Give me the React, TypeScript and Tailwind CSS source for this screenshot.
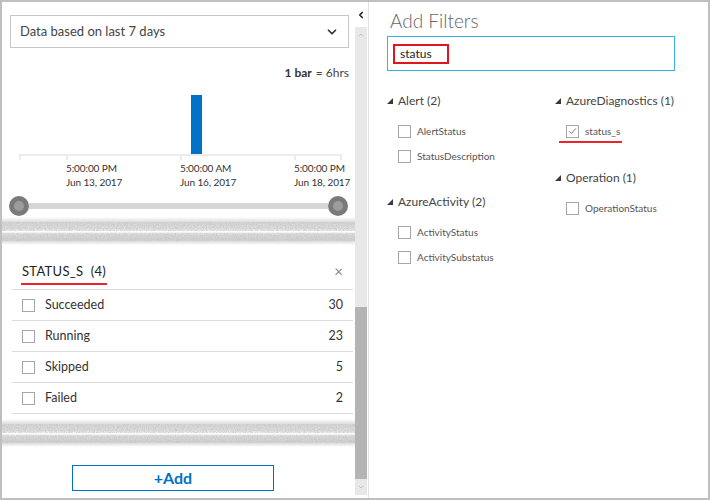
import { ChevronDown, ChevronLeft, ChevronUp } from "lucide-react";

const font = { fontFamily: "Lato, 'Open Sans', sans-serif" };

const Torn = ({ id }: { id: string }) => (
  <svg width="100%" height="28" className="block">
    <defs>
      <filter id={`${id}-f`} x="0" y="0" width="100%" height="100%">
        <feTurbulence type="fractalNoise" baseFrequency="0.9 0.7" numOctaves="2" seed="4" />
        <feColorMatrix
          type="matrix"
          values="0 0 0 0 0.55  0 0 0 0 0.55  0 0 0 0 0.55  1.8 0 0 0 -0.45"
        />
      </filter>
      <linearGradient id={`${id}-g`} x1="0" y1="0" x2="0" y2="1">
        <stop offset="0" stopColor="#ffffff" />
        <stop offset="0.2" stopColor="#d8d8d8" />
        <stop offset="0.42" stopColor="#e2e2e2" />
        <stop offset="0.52" stopColor="#fbfbfb" />
        <stop offset="0.62" stopColor="#dedede" />
        <stop offset="0.82" stopColor="#d2d2d2" />
        <stop offset="1" stopColor="#ffffff" />
      </linearGradient>
    </defs>
    <rect x="0" y="0" width="100%" height="28" fill={`url(#${id}-g)`} />
    <rect x="0" y="5" width="100%" height="9" filter={`url(#${id}-f)`} opacity="0.8" />
    <rect x="0" y="16" width="100%" height="8" filter={`url(#${id}-f)`} opacity="0.8" />
  </svg>
);

const Box = ({ checked }: { checked?: boolean }) => (
  <span className="w-[13px] h-[13px] border border-[#a6a6a6] bg-white flex items-center justify-center shrink-0">
    {checked && (
      <svg width="9" height="8" viewBox="0 0 9 8">
        <path d="M1 4.2 L3.3 6.5 L8 1.3" fill="none" stroke="#777" strokeWidth="1" />
      </svg>
    )}
  </span>
);

const Tri = () => (
  <svg width="6" height="6" viewBox="0 0 6 6" className="shrink-0">
    <path d="M6 0 L6 6 L0 6 Z" fill="#3a3a3a" />
  </svg>
);

const Group = ({ title, items, checked }: { title: string; items: string[]; checked?: string }) => (
  <div className="flex flex-col">
    <div className="flex items-center gap-[5px] h-[18px] text-[12px] text-[#444]">
      <Tri />
      <span>{title}</span>
    </div>
    <div className="flex flex-col gap-[11px] pl-[11px] mt-[14px]">
      {items.map((it) => (
        <div key={it} className="flex items-center gap-[6px] h-[14px] text-[10px] text-[#555]">
          <Box checked={it === checked} />
          <span className="relative">
            {it}
            {it === checked && (
              <span className="absolute left-[-26px] right-[-2px] top-[17px] h-[2px] bg-[#e8252b]" />
            )}
          </span>
        </div>
      ))}
    </div>
  </div>
);

const rows = [
  ["Succeeded", 30],
  ["Running", 23],
  ["Skipped", 5],
  ["Failed", 2],
];

const ticks = [
  { x: 17, t: "", d: "" },
  { x: 64, t: "5:00:00 PM", d: "Jun 13, 2017" },
  { x: 178, t: "5:00:00 AM", d: "Jun 16, 2017" },
  { x: 292, t: "5:00:00 PM", d: "Jun 18, 2017" },
  { x: 338, t: "", d: "" },
];

export default function App() {
  return (
    <div
      className="w-[710px] h-[500px] border-2 border-[#bfbfbf] bg-white flex overflow-hidden text-[#333]"
      style={font}
    >
      {/* left pane */}
      <div className="w-[353px] flex flex-col shrink-0">
        <div className="pt-[13px] pl-2 pr-[6px]">
          <div className="h-[33px] border border-[#c6c6c6] flex items-center justify-between pl-[9px] pr-[9px] text-[13px] text-[#444]">
            <span>Data based on last 7 days</span>
            <ChevronDown size={14} strokeWidth={3} className="text-[#333]" />
          </div>
        </div>
        <div className="mt-[17px] h-4 pr-[6px] flex items-center justify-end text-[12px] text-[#444]">
          <span className="font-bold text-[#333]">1 bar</span>
          <span className="ml-1">= 6hrs</span>
        </div>
        <div className="relative h-[115px]">
          <div className="absolute left-[189px] top-[14px] w-[11px] h-[60px] bg-[#0072c6]" />
          <div className="absolute left-[17px] top-[73px] w-[322px] h-[2px] bg-[#ececec]" />
          {ticks.map((k, i) => (
            <div key={i} className="absolute top-[73px]" style={{ left: k.x }}>
              <div className="w-[2px] h-[6px] bg-[#ececec]" />
              {k.t && (
                <div className="mt-[1px] text-[10px] tracking-[-0.1px] leading-[14px] text-[#333] whitespace-nowrap">
                  <div>{k.t}</div>
                  <div>{k.d}</div>
                </div>
              )}
            </div>
          ))}
        </div>
        <div className="h-5 px-[7px] flex items-center">
          <div className="w-[20px] h-[20px] rounded-full bg-[#7a7a7a] flex items-center justify-center shrink-0">
            <div className="w-[10px] h-[10px] rounded-full bg-[#9c9c9c]" />
          </div>
          <div className="flex-1 h-[6px] bg-[#d6d6d6]" />
          <div className="w-[20px] h-[20px] rounded-full bg-[#7a7a7a] flex items-center justify-center shrink-0">
            <div className="w-[10px] h-[10px] rounded-full bg-[#9c9c9c]" />
          </div>
        </div>
        <div className="mt-[1px]">
          <Torn id="t1" />
        </div>
        <div className="pl-[10px] pr-[2px]">
          <div className="h-[45px] flex items-end justify-between border-b border-[#dcdcdc] pb-[4px]">
            <div className="relative pl-[10px] text-[13px] text-[#222] tracking-[0.3px] pb-[4px]">
              STATUS_S&nbsp; (4)
              <span className="absolute left-[9px] right-[-1px] bottom-0 h-[2px] bg-[#e8252b]" />
            </div>
            <span className="text-[#888] text-[15px] leading-none pr-[10px] self-start mt-[19px]">×</span>
          </div>
          {rows.map(([l, c]) => (
            <div key={l} className="h-[31px] flex items-center border-b border-[#dcdcdc] pl-[10px] pr-[10px] text-[12.5px] text-[#333]">
              <Box />
              <span className="ml-[10px] flex-1">{l}</span>
              <span>{c}</span>
            </div>
          ))}
        </div>
        <div className="mt-[5px]">
          <Torn id="t2" />
        </div>
        <div className="pl-[70px] mt-[18px]">
          <button className="w-[202px] h-[26px] border border-[#0072c6] text-[#0072c6] text-[16px] font-bold flex items-center justify-center">
            +Add
          </button>
        </div>
      </div>

      {/* scrollbar */}
      <div className="w-[12px] flex flex-col shrink-0">
        <div className="h-[25px] flex items-center justify-center">
          <ChevronLeft size={10} strokeWidth={4} className="text-[#222]" />
        </div>
        <div className="flex-1 bg-[#e8e8e8] flex flex-col mb-[3px]">
          <div className="h-[16px] flex items-center justify-center">
            <ChevronUp size={8} className="text-[#aaa]" />
          </div>
          <div className="h-[264px]" />
          <div className="flex-1 bg-[#b4b4b4]" />
          <div className="h-[16px] flex items-center justify-center">
            <ChevronDown size={8} className="text-[#aaa]" />
          </div>
        </div>
      </div>

      {/* right pane */}
      <div className="flex-1 ml-[1px] border-l border-[#e2e2e2] flex flex-col pl-[18px]">
        <div className="mt-[6px] h-[26px] text-[19px] text-[#666] font-light pl-[3px] leading-[26px]">Add Filters</div>
        <div className="mt-[2px] w-[288px] h-[35px] border border-[#39b1e3] flex items-center pl-[5px]">
          <div className="h-[20px] w-[56px] border-2 border-[#e0161c] flex items-center pl-[5px] text-[12px] text-[#222]">
            status
          </div>
        </div>
        <div className="mt-[21px] flex">
          <div className="w-[168px] flex flex-col gap-[30px]">
            <Group title="Alert (2)" items={["AlertStatus", "StatusDescription"]} />
            <Group title="AzureActivity (2)" items={["ActivityStatus", "ActivitySubstatus"]} />
          </div>
          <div className="flex flex-col gap-[31px]">
            <Group title="AzureDiagnostics (1)" items={["status_s"]} checked="status_s" />
            <Group title="Operation (1)" items={["OperationStatus"]} />
          </div>
        </div>
      </div>
    </div>
  );
}
